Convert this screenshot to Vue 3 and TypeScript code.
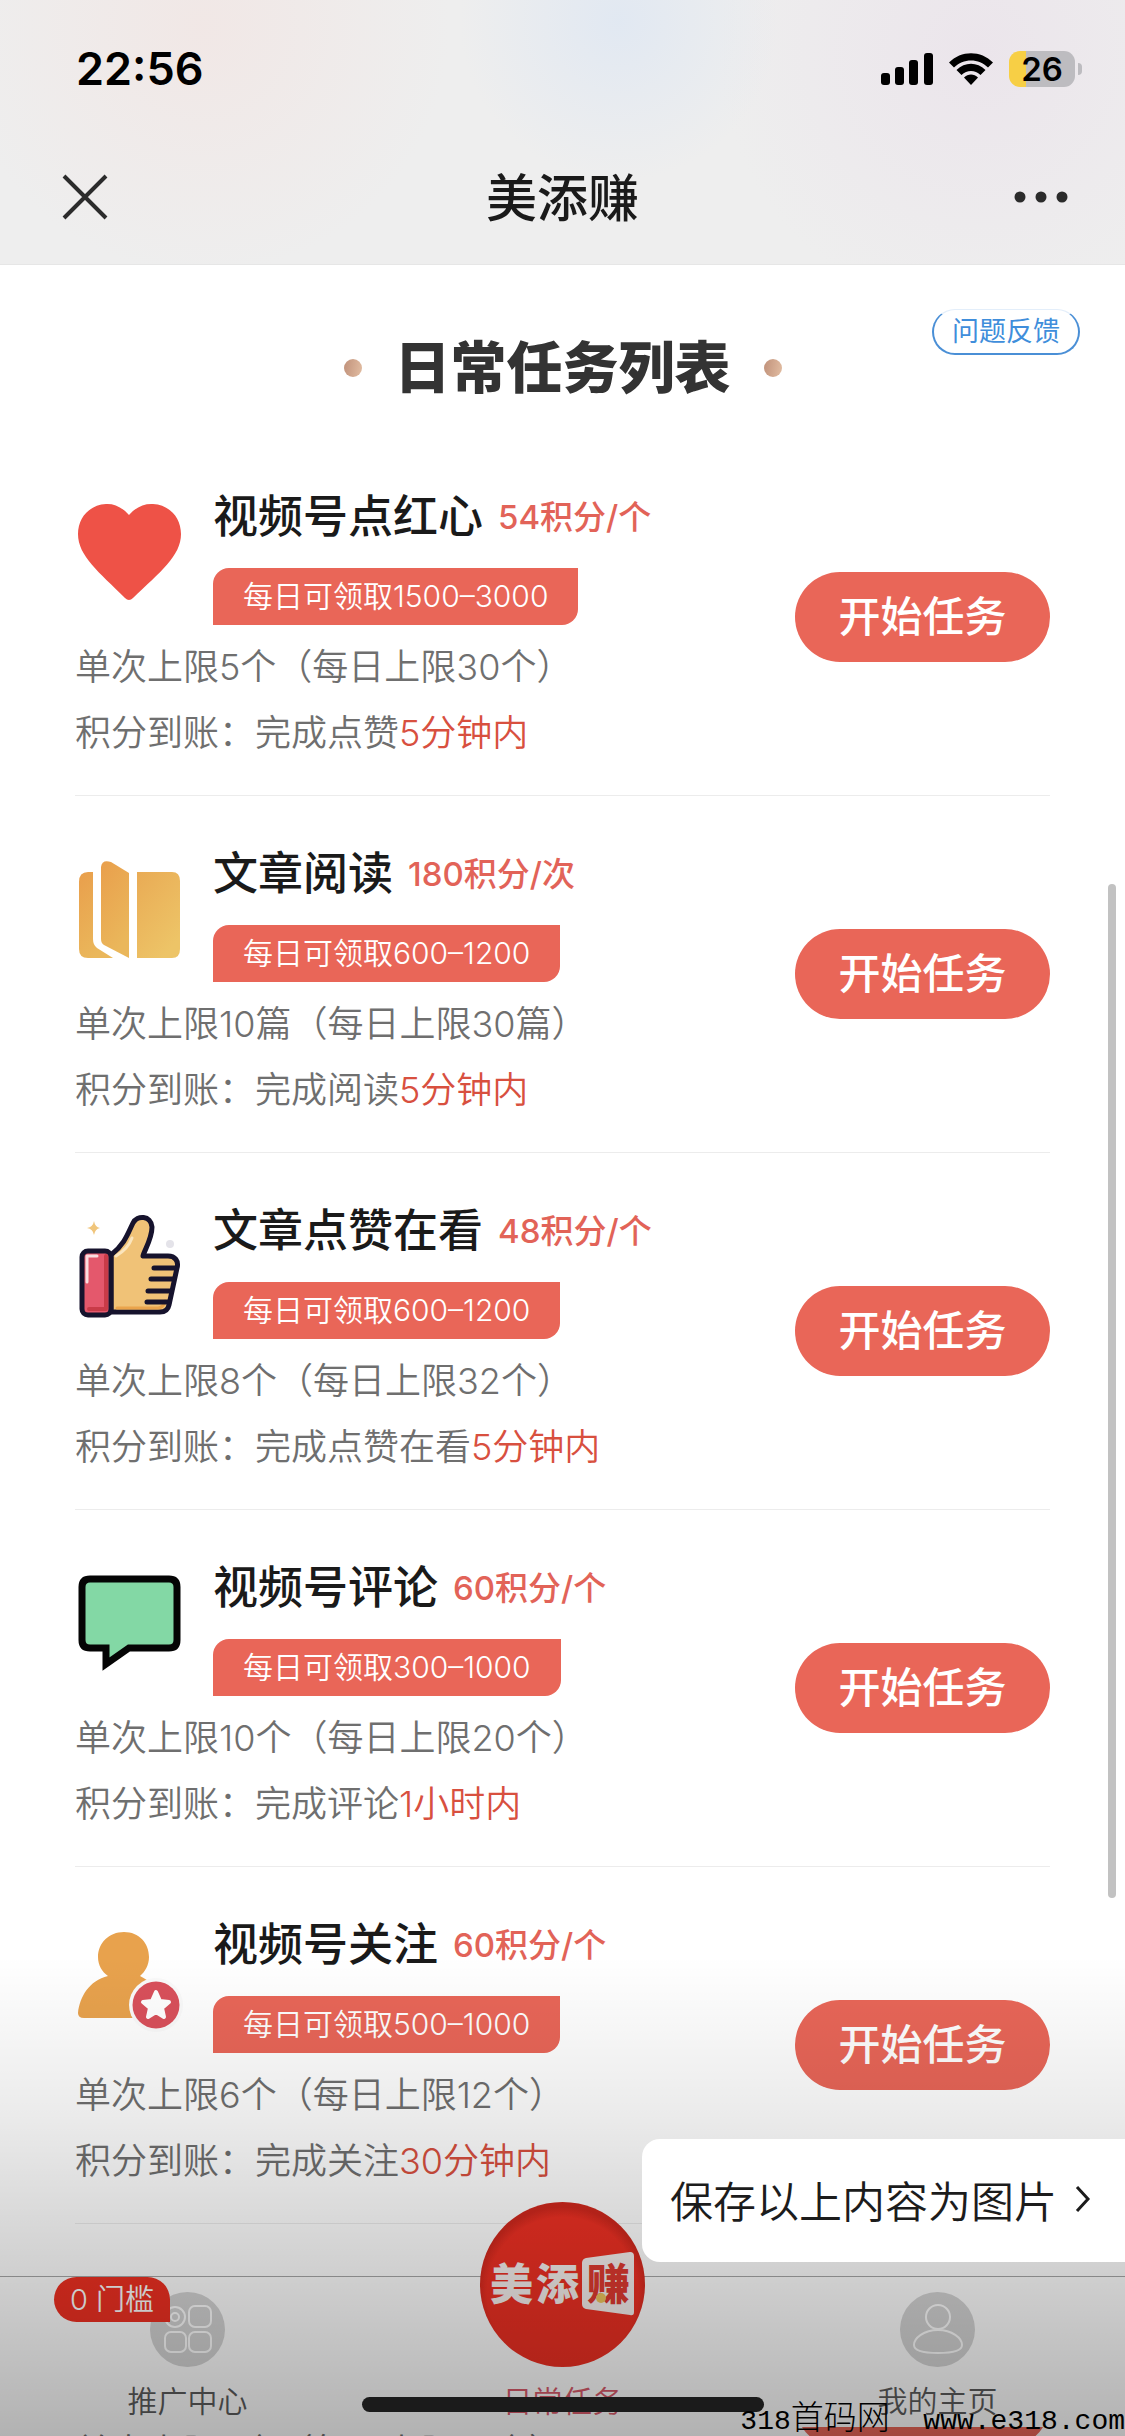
<script setup lang="ts">
interface Task {
  icon: 'heart' | 'book' | 'thumb' | 'comment' | 'follow'
  title: string
  points: string
  daily: string
  limit: string
  action: string
  delay: string
}

const tasks: Task[] = [
  { icon: 'heart', title: '视频号点红心', points: '54积分/个', daily: '1500–3000', limit: '单次上限5个（每日上限30个）', action: '完成点赞', delay: '5分钟内' },
  { icon: 'book', title: '文章阅读', points: '180积分/次', daily: '600–1200', limit: '单次上限10篇（每日上限30篇）', action: '完成阅读', delay: '5分钟内' },
  { icon: 'thumb', title: '文章点赞在看', points: '48积分/个', daily: '600–1200', limit: '单次上限8个（每日上限32个）', action: '完成点赞在看', delay: '5分钟内' },
  { icon: 'comment', title: '视频号评论', points: '60积分/个', daily: '300–1000', limit: '单次上限10个（每日上限20个）', action: '完成评论', delay: '1小时内' },
  { icon: 'follow', title: '视频号关注', points: '60积分/个', daily: '500–1000', limit: '单次上限6个（每日上限12个）', action: '完成关注', delay: '30分钟内' },
]
</script>

<template>
  <div class="screen">
    <header class="top">
      <div class="status">
        <span class="clock">22:56</span>
        <div class="indicators">
          <svg width="52" height="34" viewBox="0 0 52 34" aria-hidden="true">
            <rect x="0" y="21" width="9" height="12" rx="3" />
            <rect x="14" y="15" width="9" height="18" rx="3" />
            <rect x="28" y="8" width="9" height="25" rx="3" />
            <rect x="43" y="1" width="9" height="32" rx="3" />
          </svg>
          <svg width="44" height="34" viewBox="1 0 44 34" aria-hidden="true">
            <path d="M1 10.500C13-2 33-2 45 10.500L40 15.500C31 6 15 6 6 15.500Z" />
            <path d="M8.500 18C17 9.500 29 9.500 37.500 18L32.500 23C27 17.500 19 17.500 13.500 23Z" />
            <path d="M16 25.500C20 21.500 26 21.500 30 25.500L23 33Z" />
          </svg>
          <div class="battery"><span class="level">26</span></div>
        </div>
      </div>
      <div class="nav">
        <button class="nav-btn" aria-label="关闭">
          <svg width="46" height="46" viewBox="0 0 46 46"><path d="M2 2 44 44M44 2 2 44" fill="none" stroke="#2b2b2b" stroke-width="4" /></svg>
        </button>
        <h1 class="nav-title">美添赚</h1>
        <button class="nav-btn more" aria-label="更多">
          <svg width="54" height="12" viewBox="0 0 54 12" fill="#2b2b2b"><circle cx="6" cy="6" r="5.500" /><circle cx="27" cy="6" r="5.500" /><circle cx="48" cy="6" r="5.500" /></svg>
        </button>
      </div>
    </header>

    <main class="content">
      <div class="heading">
        <div class="heading-title">
          <i class="dot"></i>
          <h2>日常任务列表</h2>
          <i class="dot"></i>
        </div>
        <button class="feedback">问题反馈</button>
      </div>

      <ul class="tasks">
        <li v-for="task in tasks" :key="task.title" class="task">
          <div class="info">
            <div class="summary">
              <svg class="task-icon" viewBox="0 0 110 110" aria-hidden="true">
                <path v-if="task.icon === 'heart'" fill="#ee5247" d="M54 19C47 11 39 7.500 31 8 14 9 3 22 3 38 3 60 24 76 50 102Q54 106 58 102C85 76 106 60 106 38 106 22 95 9 78 8 69 7.500 61 11 54 19Z" />
                <g v-else-if="task.icon === 'book'">
                  <defs>
                    <linearGradient id="bookLeft" x1="0" y1="0" x2=".4" y2="1"><stop offset="0" stop-color="#e99f4c" /><stop offset="1" stop-color="#eab75b" /></linearGradient>
                    <linearGradient id="bookRight" x1="0" y1="0" x2=".6" y2="1"><stop offset="0" stop-color="#e9ab55" /><stop offset="1" stop-color="#edc467" /></linearGradient>
                  </defs>
                  <path fill="url(#bookLeft)" d="M18 19V86Q18 92 22 95L38 105H13Q4 105 4 96V29Q4 19 13 19Z" />
                  <path fill="url(#bookLeft)" d="M26 14Q27 6 36 9L54 20V105L29 92Q26 90 26 86Z" />
                  <path fill="url(#bookRight)" d="M62 19H97Q105 19 105 28V96Q105 105 97 105H62Z" />
                </g>
                <g v-else-if="task.icon === 'thumb'" stroke="#16132d" stroke-linejoin="round" stroke-linecap="round">
                  <path stroke="none" fill="#f0c57b" d="M19 11Q20 17 25 18 20 19 19 25 18 19 12 18 18 17 19 11Z" />
                  <circle cx="95" cy="34" r="4" stroke="none" fill="#e4e3e9" />
                  <path fill="#f0c277" stroke-width="5" d="M36 45C50 34 53 23 58 13 62 5 76 5 77 17 77 29 69 41 68 46H93C100 46 104 51 102 58L94 95C93 100 90 102 85 102H36Z" />
                  <path fill="none" stroke="#fbe5bd" stroke-width="3" d="M41 46Q53 39 57 28" />
                  <path fill="none" stroke="#eaa44c" stroke-width="3" d="M42 98H83Q88 98 90 91" />
                  <rect x="7" y="41" width="29" height="64" rx="6" fill="#e4586c" stroke-width="5" />
                  <path fill="none" stroke="#c93b48" stroke-width="4" d="M31 46V99H14" />
                  <path fill="none" stroke="#fbdde0" stroke-width="3" d="M12 72V46H22" />
                  <path fill="none" stroke-width="5" d="M79 58H100M76 69H98M73 81H96M72 92H94" />
                </g>
                <path v-else-if="task.icon === 'comment'" fill="#83d8a5" stroke="#050505" stroke-width="7" d="M15 12H94Q102 12 102 20V73Q102 81 94 81H54L31 97V81H15Q7 81 7 73V20Q7 12 15 12Z" />
                <g v-else>
                  <path fill="#e8a24d" d="M49 8C64 8 74 19 74 33 74 41 70 48 65 52 85 62 90 76 90 94H9Q3 94 3 89C5 72 14 57 33 52 27 48 23 41 23 33 23 19 34 8 49 8Z" />
                  <circle cx="81" cy="81" r="27" fill="#fafafa" />
                  <circle cx="81" cy="81" r="23.500" fill="#d9505b" />
                  <path fill="#fff" stroke="#fff" stroke-width="4" stroke-linejoin="round" d="M81 68 85 77 94 78 87 84 89 93 81 88 73 93 75 84 68 78 77 77Z" />
                </g>
              </svg>
              <div class="head">
                <div class="title-line">
                  <h3>{{ task.title }}</h3>
                  <span class="points">{{ task.points }}</span>
                </div>
                <span class="daily">每日可领取{{ task.daily }}</span>
              </div>
            </div>
            <p class="note">{{ task.limit }}</p>
            <p class="note">积分到账：{{ task.action }}<em>{{ task.delay }}</em></p>
          </div>
          <button class="start">开始任务</button>
        </li>
        <li class="task upcoming">
          <p class="note">单次上限6个（每日上限12个）</p>
          <button class="start" aria-label="开始任务"></button>
        </li>
      </ul>
    </main>

    <div class="scroll-thumb"></div>

    <nav class="tabs">
      <a href="#promo" class="tab">
        <span class="tab-icon">
          <svg width="75" height="75" viewBox="0 0 75 75" fill="none" stroke="#fff" stroke-width="2" aria-hidden="true">
            <circle cx="37.500" cy="37.500" r="37.500" fill="#d5d5d5" stroke="none" />
            <circle cx="25" cy="25" r="10" /><circle cx="25" cy="25" r="4" />
            <rect x="39" y="14" width="22" height="21" rx="6" />
            <rect x="15" y="40" width="21" height="20" rx="6" />
            <rect x="39" y="40" width="22" height="20" rx="6" />
          </svg>
          <span class="pill">0 门槛</span>
        </span>
        <span class="tab-label">推广中心</span>
      </a>
      <a href="#tasks" class="tab active">
        <svg class="logo" width="165" height="165" viewBox="0 0 165 165">
          <defs>
            <radialGradient id="logoRed" cx=".5" cy=".55" r=".52"><stop offset=".88" stop-color="#ee3023" /><stop offset="1" stop-color="#d0281d" /></radialGradient>
          </defs>
          <circle cx="82.500" cy="82.500" r="82.500" fill="url(#logoRed)" />
          <text x="10" y="98" class="logo-text" fill="#f6f0ee">美</text>
          <text x="56" y="98" class="logo-text" fill="#f6f0ee">添</text>
          <path fill="#f6f0ee" d="M106 56 150 50Q154 50 154 54V110Q154 114 150 113L106 107Q102 106 102 102V61Q102 57 106 56Z" />
          <text x="107" y="98" class="logo-text" fill="#e03a30">赚</text>
          <circle cx="121" cy="96" r="5" fill="#eec65e" />
        </svg>
        <span class="tab-label">日常任务</span>
      </a>
      <a href="#me" class="tab">
        <span class="tab-icon">
          <svg width="75" height="75" viewBox="0 0 75 75" fill="none" stroke="#fff" stroke-width="2" aria-hidden="true">
            <circle cx="37.500" cy="37.500" r="37.500" fill="#d5d5d5" stroke="none" />
            <circle cx="38" cy="25" r="12" />
            <path d="M38 38C52 38 62 46 62 53 62 59 52 61 38 61 24 61 14 59 14 53 14 46 24 38 38 38Z" />
          </svg>
        </span>
        <span class="tab-label">我的主页</span>
      </a>
    </nav>

    <div class="shade"></div>

    <button class="save">
      保存以上内容为图片
      <svg width="16" height="28" viewBox="0 0 16 28" aria-hidden="true"><path d="M2 2 13 14 2 26" fill="none" stroke="#1c1c1c" stroke-width="3" /></svg>
    </button>
    <div class="home-bar"></div>
    <p class="watermark">318<span>首码网</span>&nbsp;&nbsp;www.e318.com</p>
  </div>
</template>

<style>
body {
  background: #fff;
}
</style>

<style scoped>
* {
  box-sizing: border-box;
}

h1, h2, h3, p, ul {
  margin: 0;
  padding: 0;
}

button {
  border: 0;
  padding: 0;
  background: none;
  font-family: inherit;
  color: inherit;
}

svg {
  display: block;
  flex: none;
}

.screen {
  position: relative;
  display: flex;
  flex-direction: column;
  height: 100vh;
  overflow: hidden;
  background: #fff;
  color: #1a1a1a;
  font-family: Inter, "Noto Sans CJK SC", sans-serif;
}

.top {
  flex: none;
  background:
    radial-gradient(circle at 18% 10%, rgba(243, 227, 224, 0.6), transparent 26%),
    radial-gradient(circle at 55% 8%, rgba(222, 231, 243, 0.8), transparent 24%),
    radial-gradient(circle at 87% 20%, rgba(234, 225, 234, 0.7), transparent 26%),
    #eeeeee;
  border-bottom: 1px solid #e6e6e6;
}

.status {
  display: flex;
  align-items: center;
  justify-content: space-between;
  height: 130px;
  padding: 8px 43px 0 76px;
  color: #000;
}

.clock {
  font-size: 45px;
  font-weight: 600;
  line-height: 54px;
}

.indicators {
  display: flex;
  align-items: center;
  gap: 16px;
}

.battery {
  position: relative;
  width: 66px;
  height: 36px;
  margin-right: 7px;
  border-radius: 11px;
  background: linear-gradient(90deg, #f7cf45 26%, #bdbcc0 26%);
}

.battery::after {
  content: "";
  position: absolute;
  left: 69px;
  top: 12px;
  width: 4px;
  height: 12px;
  border-radius: 0 4px 4px 0;
  background: #bdbcc0;
}

.level {
  display: block;
  font-size: 33px;
  font-weight: 600;
  line-height: 36px;
  text-align: center;
}

.nav {
  display: grid;
  grid-template-columns: 1fr auto 1fr;
  align-items: center;
  height: 134px;
  padding: 0 57px;
}

.nav-btn {
  justify-self: start;
  padding-left: 5px;
}

.more {
  justify-self: end;
}

.nav-title {
  padding-top: 4px;
  font-size: 51px;
  font-weight: 500;
  line-height: 72px;
}

.content {
  flex: 1;
  min-height: 0;
  overflow: hidden;
}

.heading {
  display: grid;
  grid-template-columns: 1fr auto 1fr;
  align-items: start;
  padding: 44px 45px 34px;
}

.heading-title {
  grid-column: 2;
  display: flex;
  align-items: center;
  gap: 33px;
  margin-top: 22px;
}

.heading-title h2 {
  color: #333;
  font-size: 56px;
  font-weight: 900;
  line-height: 74px;
}

.dot {
  width: 18px;
  height: 18px;
  border-radius: 50%;
  background: linear-gradient(100deg, #c0917a, #e2bda2);
}

.feedback {
  justify-self: end;
  width: 148px;
  height: 46px;
  border: 2px solid #4a8fd6;
  border-top: 1px solid #e3eefa;
  border-radius: 23px;
  color: #3f8edb;
  font-size: 27px;
  line-height: 40px;
}

.tasks {
  list-style: none;
  padding: 0 75px;
}

.task {
  display: flex;
  align-items: center;
  justify-content: space-between;
  border-bottom: 1px solid #ececec;
}

.info {
  padding: 46px 0 29px;
}

.summary {
  display: flex;
  align-items: flex-start;
  gap: 28px;
  margin-bottom: 9px;
}

.task-icon {
  width: 110px;
  height: 110px;
  margin-top: 11px;
}

.head {
  display: flex;
  flex-direction: column;
  align-items: flex-start;
  gap: 19px;
}

.title-line {
  display: flex;
  align-items: center;
  gap: 15px;
  line-height: 64px;
}

.title-line h3 {
  font-size: 45px;
  font-weight: 500;
}

.points {
  color: #e26358;
  font-size: 33px;
  font-weight: 500;
}

.daily {
  padding: 0 30px;
  border-radius: 16px 0;
  background: #e96658;
  color: #fff;
  font-size: 30px;
  font-weight: 350;
  line-height: 57px;
}

.note {
  color: #6f6f6f;
  font-size: 36px;
  font-weight: 350;
  line-height: 66px;
}

.note em {
  color: #d8503f;
  font-style: normal;
}

.start {
  flex: none;
  width: 255px;
  height: 90px;
  border-radius: 45px;
  background: #e96658;
  color: #fff;
  font-size: 42px;
  font-weight: 500;
  line-height: 90px;
}

.upcoming {
  align-items: flex-start;
}

.upcoming .note {
  padding-top: 195px;
}

.upcoming .start {
  margin-top: 134px;
}

.scroll-thumb {
  position: absolute;
  right: 9px;
  top: 36.3%;
  width: 8px;
  height: 41.6%;
  border-radius: 4px;
  background: #c2c2c2;
}

.tabs {
  position: absolute;
  left: 0;
  right: 0;
  bottom: 9px;
  display: flex;
  height: 151px;
  border-top: 1px solid #a8a8a8;
  background: #fff;
}

.tab {
  flex: 1;
  display: flex;
  flex-direction: column;
  align-items: center;
  justify-content: flex-end;
  gap: 14px;
  padding-bottom: 6px;
  color: #5c5c5c;
  text-decoration: none;
}

.tab-icon {
  position: relative;
}

.tab-label {
  font-size: 30px;
  font-weight: 350;
  line-height: 40px;
}

.active {
  color: #d95b6b;
}

.pill {
  position: absolute;
  right: 55px;
  top: -15px;
  padding: 0 16px;
  border-radius: 23px 23px 0 23px;
  background: #f03022;
  color: #fff;
  font-size: 29px;
  font-weight: 350;
  line-height: 45px;
  white-space: nowrap;
}

.logo-text {
  font-size: 43px;
  font-weight: 900;
}

.shade {
  position: absolute;
  left: 0;
  right: 0;
  bottom: 0;
  height: 480px;
  background: linear-gradient(rgba(0, 0, 0, 0), rgba(0, 0, 0, 0.08) 33%, rgba(0, 0, 0, 0.18) 64%, rgba(0, 0, 0, 0.3));
  pointer-events: none;
}

.save {
  position: absolute;
  right: 0;
  bottom: 174px;
  display: flex;
  align-items: center;
  gap: 18px;
  height: 123px;
  padding: 0 34px 4px 28px;
  border-radius: 18px 0 0 18px;
  background: #fff;
  color: #1c1c1c;
  font-size: 43px;
  font-weight: 350;
  white-space: nowrap;
}

.home-bar {
  position: absolute;
  left: 50%;
  bottom: 24px;
  width: 402px;
  height: 15px;
  margin-left: -201px;
  border-radius: 8px;
  background: #1b1b1b;
}

.watermark {
  position: absolute;
  right: 0;
  bottom: 0;
  color: #000;
  font-family: "Liberation Mono", "Noto Sans CJK SC", monospace;
  font-size: 28px;
  line-height: 28px;
  white-space: nowrap;
}

.watermark span {
  font-size: 33px;
  font-weight: 300;
}
</style>
